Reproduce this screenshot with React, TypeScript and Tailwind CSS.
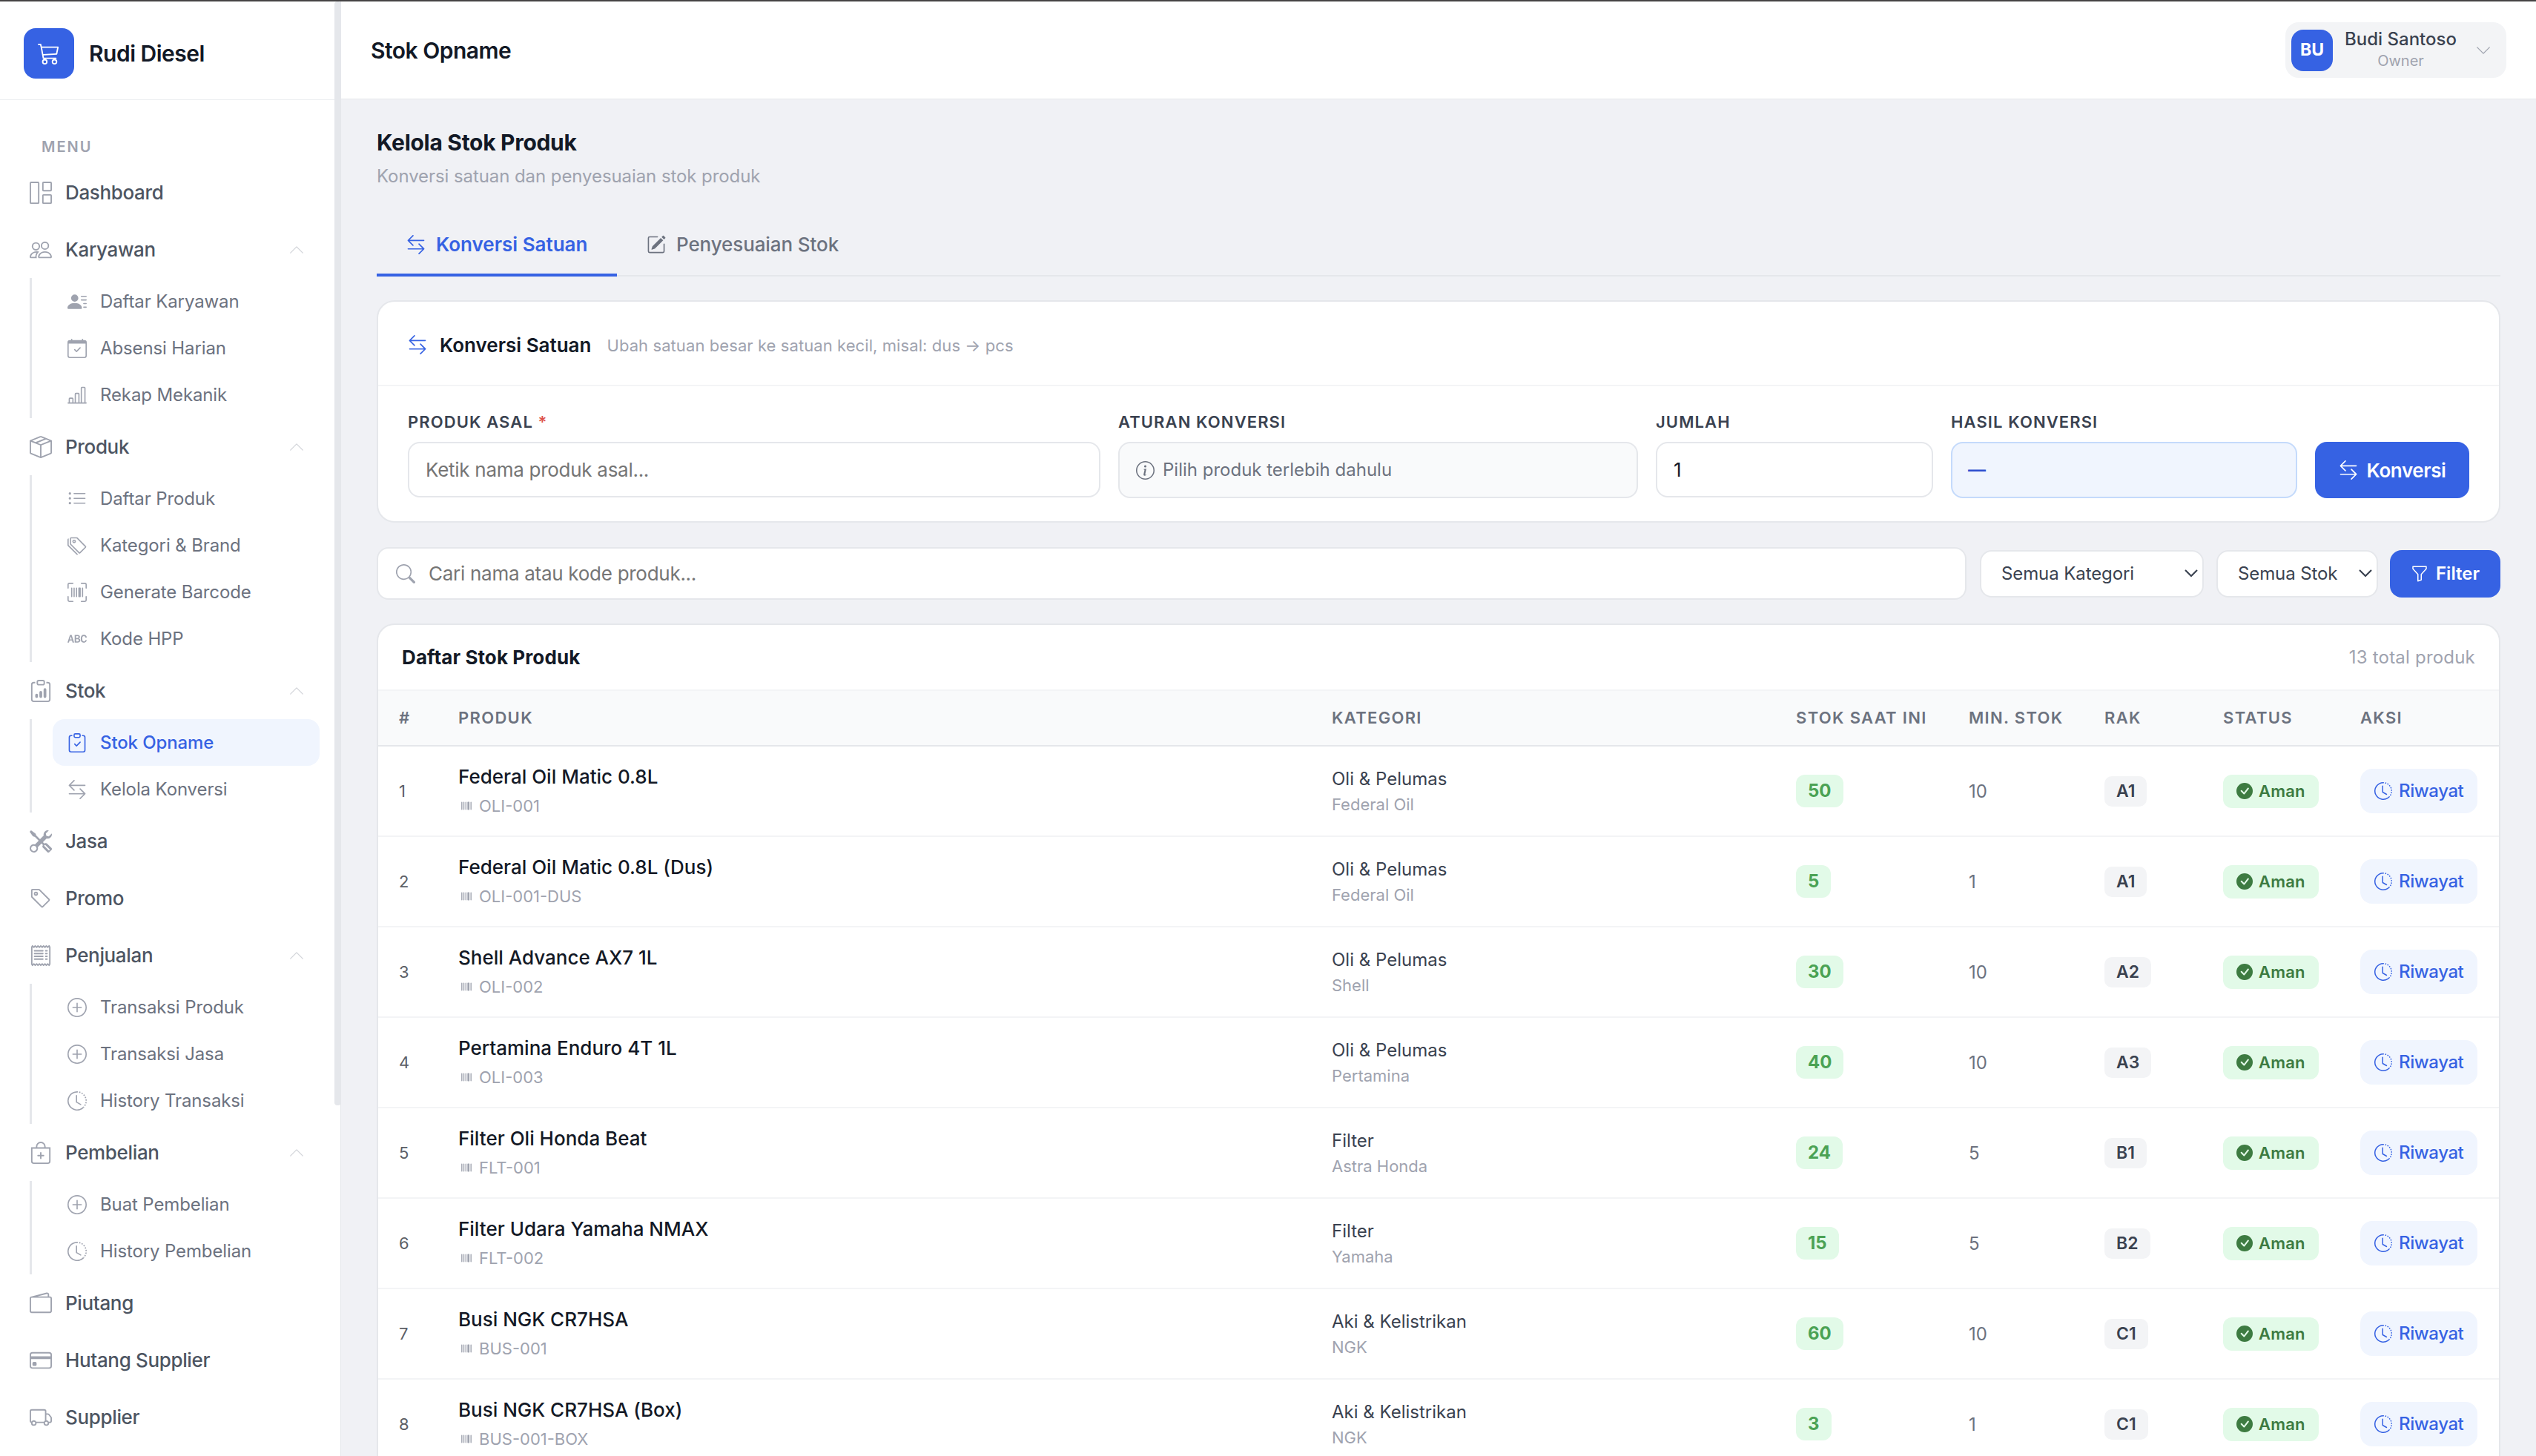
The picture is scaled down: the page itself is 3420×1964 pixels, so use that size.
import type { ReactNode } from 'react';
import type { IconType } from 'react-icons';
import {
  BsAlphabetUppercase,
  BsArrowLeftRight,
  BsBagPlus,
  BsBarChartLine,
  BsBoxSeam,
  BsCalendarCheck,
  BsCart3,
  BsCheckCircleFill,
  BsChevronDown,
  BsChevronUp,
  BsClipboardCheck,
  BsClipboardData,
  BsClockHistory,
  BsCreditCard,
  BsFunnel,
  BsGrid1X2,
  BsInfoCircle,
  BsListUl,
  BsPencilSquare,
  BsPeople,
  BsPersonLinesFill,
  BsPlusCircle,
  BsReceipt,
  BsSearch,
  BsTag,
  BsTags,
  BsTools,
  BsTruck,
  BsUpc,
  BsUpcScan,
  BsWallet2,
} from 'react-icons/bs';

interface SubItem {
  label: string;
  icon: IconType;
  active?: boolean;
}

interface MenuItem {
  label: string;
  icon: IconType;
  children?: SubItem[];
}

interface Product {
  name: string;
  code: string;
  category: string;
  brand: string;
  stock: number;
  min: number;
  rack: string;
}

const menu: MenuItem[] = [
  { label: 'Dashboard', icon: BsGrid1X2 },
  {
    label: 'Karyawan',
    icon: BsPeople,
    children: [
      { label: 'Daftar Karyawan', icon: BsPersonLinesFill },
      { label: 'Absensi Harian', icon: BsCalendarCheck },
      { label: 'Rekap Mekanik', icon: BsBarChartLine },
    ],
  },
  {
    label: 'Produk',
    icon: BsBoxSeam,
    children: [
      { label: 'Daftar Produk', icon: BsListUl },
      { label: 'Kategori & Brand', icon: BsTags },
      { label: 'Generate Barcode', icon: BsUpcScan },
      { label: 'Kode HPP', icon: BsAlphabetUppercase },
    ],
  },
  {
    label: 'Stok',
    icon: BsClipboardData,
    children: [
      { label: 'Stok Opname', icon: BsClipboardCheck, active: true },
      { label: 'Kelola Konversi', icon: BsArrowLeftRight },
    ],
  },
  { label: 'Jasa', icon: BsTools },
  { label: 'Promo', icon: BsTag },
  {
    label: 'Penjualan',
    icon: BsReceipt,
    children: [
      { label: 'Transaksi Produk', icon: BsPlusCircle },
      { label: 'Transaksi Jasa', icon: BsPlusCircle },
      { label: 'History Transaksi', icon: BsClockHistory },
    ],
  },
  {
    label: 'Pembelian',
    icon: BsBagPlus,
    children: [
      { label: 'Buat Pembelian', icon: BsPlusCircle },
      { label: 'History Pembelian', icon: BsClockHistory },
    ],
  },
  { label: 'Piutang', icon: BsWallet2 },
  { label: 'Hutang Supplier', icon: BsCreditCard },
  { label: 'Supplier', icon: BsTruck },
];

const products: Product[] = [
  { name: 'Federal Oil Matic 0.8L', code: 'OLI-001', category: 'Oli & Pelumas', brand: 'Federal Oil', stock: 50, min: 10, rack: 'A1' },
  { name: 'Federal Oil Matic 0.8L (Dus)', code: 'OLI-001-DUS', category: 'Oli & Pelumas', brand: 'Federal Oil', stock: 5, min: 1, rack: 'A1' },
  { name: 'Shell Advance AX7 1L', code: 'OLI-002', category: 'Oli & Pelumas', brand: 'Shell', stock: 30, min: 10, rack: 'A2' },
  { name: 'Pertamina Enduro 4T 1L', code: 'OLI-003', category: 'Oli & Pelumas', brand: 'Pertamina', stock: 40, min: 10, rack: 'A3' },
  { name: 'Filter Oli Honda Beat', code: 'FLT-001', category: 'Filter', brand: 'Astra Honda', stock: 24, min: 5, rack: 'B1' },
  { name: 'Filter Udara Yamaha NMAX', code: 'FLT-002', category: 'Filter', brand: 'Yamaha', stock: 15, min: 5, rack: 'B2' },
  { name: 'Busi NGK CR7HSA', code: 'BUS-001', category: 'Aki & Kelistrikan', brand: 'NGK', stock: 60, min: 10, rack: 'C1' },
  { name: 'Busi NGK CR7HSA (Box)', code: 'BUS-001-BOX', category: 'Aki & Kelistrikan', brand: 'NGK', stock: 3, min: 1, rack: 'C1' },
];

function Sidebar() {
  return (
    <aside className="flex w-[460px] shrink-0 bg-white">
      <div className="w-[451px]">
        <div className="flex h-[133px] items-center gap-[20px] border-b border-[#eceef0] pl-8 pt-[7px]">
          <div className="flex h-[68px] w-[68px] items-center justify-center rounded-[16px] bg-[#3662e3]">
            <BsCart3 className="h-[30px] w-[30px] text-white" />
          </div>
          <span className="mt-[2px] text-[30px] font-semibold tracking-[-0.5px] text-[#131926]">Rudi Diesel</span>
        </div>
        <div className="flex h-[86px] items-end pb-[8px] pl-[56px] text-[20px] font-semibold tracking-[0.1em] text-[#9fa3af]">
          MENU
        </div>
        <nav>
          {menu.map((item) => (
            <div key={item.label}>
              <div className="flex h-[77px] items-center pl-10 text-[#9fa3af]">
                <item.icon className="h-[30px] w-[30px]" />
                <span className="ml-[18px] flex-1 text-[26px] font-medium tracking-[-0.35px] text-[#4d5562]">
                  {item.label}
                </span>
                {item.children && <BsChevronUp className="mr-10 h-[22px] w-[22px] text-[#d3d5da]" />}
              </div>
              {item.children && (
                <div className="ml-10 border-l-[3px] border-[#e5e7eb] pl-[28px]">
                  {item.children.map((sub) => (
                    <div
                      key={sub.label}
                      className={`flex h-[63px] w-[360px] items-center gap-[18px] rounded-[16px] pl-5 text-[24px] tracking-[-0.12px] ${
                        sub.active ? 'bg-[#f0f5fe] font-medium text-[#3662e3]' : 'text-[#6c727f]'
                      }`}
                    >
                      <sub.icon className={`h-[26px] w-[26px] ${sub.active ? '' : 'text-[#9fa3af]'}`} />
                      <span className="mt-px">{sub.label}</span>
                    </div>
                  ))}
                </div>
              )}
            </div>
          ))}
        </nav>
      </div>
      {/* scrollbar */}
      <div className="w-[9px] border-r border-[#e5e7eb]">
        <div className="h-[1489px] w-[9px] rounded-[4px] bg-[#e5e7eb]" />
      </div>
    </aside>
  );
}

function Topbar() {
  return (
    <header className="flex h-[132px] shrink-0 items-center justify-between border-b border-[#e5e7eb] bg-white pl-10 pr-10">
      <h1 className="mt-[2px] text-[30px] font-semibold tracking-[-0.5px] text-[#131926]">Stok Opname</h1>
      <div className="flex h-[75px] w-[298px] items-center rounded-[18px] bg-[#f3f4f6] pl-2">
        <div className="flex h-[56px] w-[56px] items-center justify-center rounded-[16px] bg-[#3662e3] text-[23px] font-bold text-white">
          BU
        </div>
        <div className="ml-4 flex w-[151px] flex-col items-center pb-[2px]">
          <span className="whitespace-nowrap text-[24px] font-medium leading-[30px] text-[#3a4250]">Budi Santoso</span>
          <span className="text-[20px] leading-[28px] text-[#9fa3af]">Owner</span>
        </div>
        <BsChevronDown className="ml-[25px] h-[22px] w-[22px] text-[#9fa3af]" />
      </div>
    </header>
  );
}

function Field({ label, required, className, children }: { label: string; required?: boolean; className: string; children: ReactNode }) {
  return (
    <div className={className}>
      <div className="mb-[14px] text-[22px] font-semibold leading-[26px] tracking-[0.05em] text-[#3a4250]">
        {label} {required && <span className="text-[#dd524c]">*</span>}
      </div>
      {children}
    </div>
  );
}

function ConversionCard() {
  return (
    <section className="mt-8 h-[300px] rounded-[24px] border-2 border-[#e5e7eb] bg-white">
      <div className="flex h-[114px] items-center border-b-2 border-[#f3f4f6] pl-10 pt-[4px]">
        <BsArrowLeftRight className="h-[26px] w-[26px] text-[#3662e3]" />
        <h3 className="ml-[17px] text-[26px] font-semibold text-[#131926]">Konversi Satuan</h3>
        <span className="ml-[21px] mt-[3px] text-[22px] tracking-[0.08px] text-[#9fa3af]">
          Ubah satuan besar ke satuan kecil, misal: dus → pcs
        </span>
      </div>
      <div className="flex gap-6 pl-10 pt-[35px]">
        <Field label="PRODUK ASAL" required className="w-[934px]">
          <div className="flex h-[75px] items-center rounded-[16px] border-2 border-[#e5e7eb] pl-[22px] text-[26px] tracking-[-0.28px] text-[#757575]">
            Ketik nama produk asal...
          </div>
        </Field>
        <Field label="ATURAN KONVERSI" className="w-[701px]">
          <div className="flex h-[76px] items-center gap-[11px] rounded-[16px] border-2 border-[#e5e7eb] bg-[#f9fafb] pl-[22px] text-[24px] text-[#6c727f]">
            <BsInfoCircle className="h-[25px] w-[25px]" />
            Pilih produk terlebih dahulu
          </div>
        </Field>
        <Field label="JUMLAH" className="w-[374px]">
          <div className="flex h-[75px] items-center rounded-[16px] border-2 border-[#e5e7eb] pl-[22px] text-[26px] text-[#131926]">
            1
          </div>
        </Field>
        <Field label="HASIL KONVERSI" className="w-[467px]">
          <div className="flex h-[76px] items-center rounded-[16px] border-2 border-[#c4dafb] bg-[#f0f5fe] pl-[21px] text-[24px] font-semibold text-[#2e4fcf]">
            —
          </div>
        </Field>
        <button className="mt-[40px] flex h-[76px] w-[208px] items-center justify-center gap-[12px] rounded-[16px] bg-[#3662e3] text-[26px] font-semibold tracking-[-0.4px] text-white">
          <BsArrowLeftRight className="h-[26px] w-[26px]" />
          Konversi
        </button>
      </div>
    </section>
  );
}

function Select({ label, className }: { label: string; className: string }) {
  return (
    <div className={`flex h-[64px] items-center justify-between rounded-[16px] border-2 border-[#e5e7eb] bg-white pl-[27px] pr-[6px] text-[24px] tracking-[-0.1px] text-[#3a4250] ${className}`}>
      {label}
      <svg width="18" height="11" viewBox="0 0 18 11" fill="none" stroke="currentColor" strokeWidth="2.2">
        <path d="M1 1l8 8 8-8" />
      </svg>
    </div>
  );
}

function FilterBar() {
  return (
    <div className="mt-[33px] flex items-center">
      <div className="flex h-[71px] w-[2144px] items-center gap-[18px] rounded-[16px] border-2 border-[#e5e7eb] bg-white pl-6 text-[26px] tracking-[-0.28px] text-[#757575]">
        <BsSearch className="h-[26px] w-[26px] text-[#9fa3af]" />
        Cari nama atau kode produk...
      </div>
      <Select label="Semua Kategori" className="ml-[18px] w-[302px]" />
      <Select label="Semua Stok" className="ml-[17px] w-[218px]" />
      <button className="ml-[16px] flex h-[64px] w-[149px] items-center justify-center gap-[10px] rounded-[16px] bg-[#3662e3] text-[24px] font-semibold text-white">
        <BsFunnel className="h-[24px] w-[24px]" />
        Filter
      </button>
    </div>
  );
}

function StockTable() {
  return (
    <section className="mt-8 h-[1700px] overflow-hidden rounded-t-[24px] border-2 border-[#e5e7eb] bg-white">
      <div className="flex h-[89px] items-center justify-between border-b-2 border-[#f3f4f6] pl-8 pr-8">
        <h3 className="text-[26px] font-bold tracking-[0.1px] text-[#131926]">Daftar Stok Produk</h3>
        <span className="text-[24px] tracking-[0.2px] text-[#9fa3af]">13 total produk</span>
      </div>
      <table className="w-full table-fixed border-collapse text-left">
        <colgroup>
          <col className="w-[80px]" />
          <col className="w-[1178px]" />
          <col className="w-[626px]" />
          <col className="w-[233px]" />
          <col className="w-[183px]" />
          <col className="w-[160px]" />
          <col className="w-[185px]" />
          <col />
        </colgroup>
        <thead>
          <tr className="h-[75px] bg-[#f9fafb] text-[22px] tracking-[0.06em] text-[#6c727f] shadow-[inset_0_-2px_0_#e5e7eb]">
            {['#', 'PRODUK', 'KATEGORI', 'STOK SAAT INI', 'MIN. STOK', 'RAK', 'STATUS', 'AKSI'].map((h) => (
              <th key={h} className="whitespace-nowrap pb-0.5 pl-7 font-semibold">
                {h}
              </th>
            ))}
          </tr>
        </thead>
        <tbody>
          {products.map((p, i) => (
            <tr key={p.code} className="h-[122px] shadow-[inset_0_-2px_0_#f3f4f6]">
              <td className="pb-0.5 pl-7 text-[22px] text-[#5c5f66]">{i + 1}</td>
              <td className="pb-px pl-7">
                <div className="text-[26px] font-medium leading-[36px] text-[#131926]">{p.name}</div>
                <div className="mt-[3px] flex items-center gap-[6px] text-[22px] leading-[36px] text-[#9fa3af]">
                  <BsUpc className="h-[22px] w-[22px]" />
                  {p.code}
                </div>
              </td>
              <td className="pb-px pl-7">
                <div className="text-[24px] leading-[34px] text-[#3a4250]">{p.category}</div>
                <div className="text-[22px] leading-[34px] text-[#9fa3af]">{p.brand}</div>
              </td>
              <td className="pb-0.5 pl-7">
                <span className="inline-flex h-[44px] items-center rounded-[12px] bg-[#e2fae8] px-4 text-[24px] font-bold text-[#4ba254]">
                  {p.stock}
                </span>
              </td>
              <td className="pl-7 text-[24px] text-[#6c727f]">{p.min}</td>
              <td className="pb-0.5 pl-7">
                <span className="inline-flex h-[41px] items-center rounded-[10px] bg-[#f3f4f6] px-4 text-[23px] font-semibold text-[#3a4250]">
                  {p.rack}
                </span>
              </td>
              <td className="pb-0.5 pl-7">
                <span className="inline-flex h-[45px] items-center gap-[8px] rounded-[12px] bg-[#e2fae8] px-[18px] text-[22px] font-semibold tracking-[0.2px] text-[#3d7b41]">
                  <BsCheckCircleFill className="h-[22px] w-[22px]" />
                  Aman
                </span>
              </td>
              <td className="pb-0.5 pl-7">
                <span className="inline-flex h-[60px] items-center gap-[9px] rounded-[16px] bg-[#f0f5fe] px-[19px] text-[24px] font-medium tracking-[-0.4px] text-[#3662e3]">
                  <BsClockHistory className="h-[24px] w-[24px]" />
                  Riwayat
                </span>
              </td>
            </tr>
          ))}
        </tbody>
      </table>
    </section>
  );
}

export default function App() {
  return (
    <div className="flex h-[1964px] w-[3420px] flex-col overflow-hidden bg-[#f0f1f5] font-['Inter',sans-serif]">
      <div className="h-[2px] shrink-0 bg-[#454344]" />
      <div className="flex min-h-0 flex-1">
        <Sidebar />
        <div className="flex min-w-0 flex-1 flex-col">
          <Topbar />
          <main className="flex-1 overflow-hidden px-12 pt-[38px]">
            <h2 className="text-[30px] font-bold leading-[40px] tracking-[-0.3px] text-[#131926]">Kelola Stok Produk</h2>
            <p className="mt-[6px] text-[24px] leading-[40px] tracking-[-0.08px] text-[#9fa3af]">Konversi satuan dan penyesuaian stok produk</p>
            <div className="mt-[30px] flex h-[85px] shadow-[inset_0_-2px_0_#e5e7eb]">
              <div className="flex w-[324px] items-center gap-[14px] border-b-4 border-[#3662e3] pl-10 pt-[2px] text-[26px] font-semibold text-[#3662e3]">
                <BsArrowLeftRight className="h-[26px] w-[26px]" />
                Konversi Satuan
              </div>
              <div className="flex items-center gap-[14px] pb-0.5 pl-10 text-[26px] font-medium tracking-[-0.1px] text-[#6c727f]">
                <BsPencilSquare className="h-[26px] w-[26px]" />
                Penyesuaian Stok
              </div>
            </div>
            <ConversionCard />
            <FilterBar />
            <StockTable />
          </main>
        </div>
      </div>
    </div>
  );
}
